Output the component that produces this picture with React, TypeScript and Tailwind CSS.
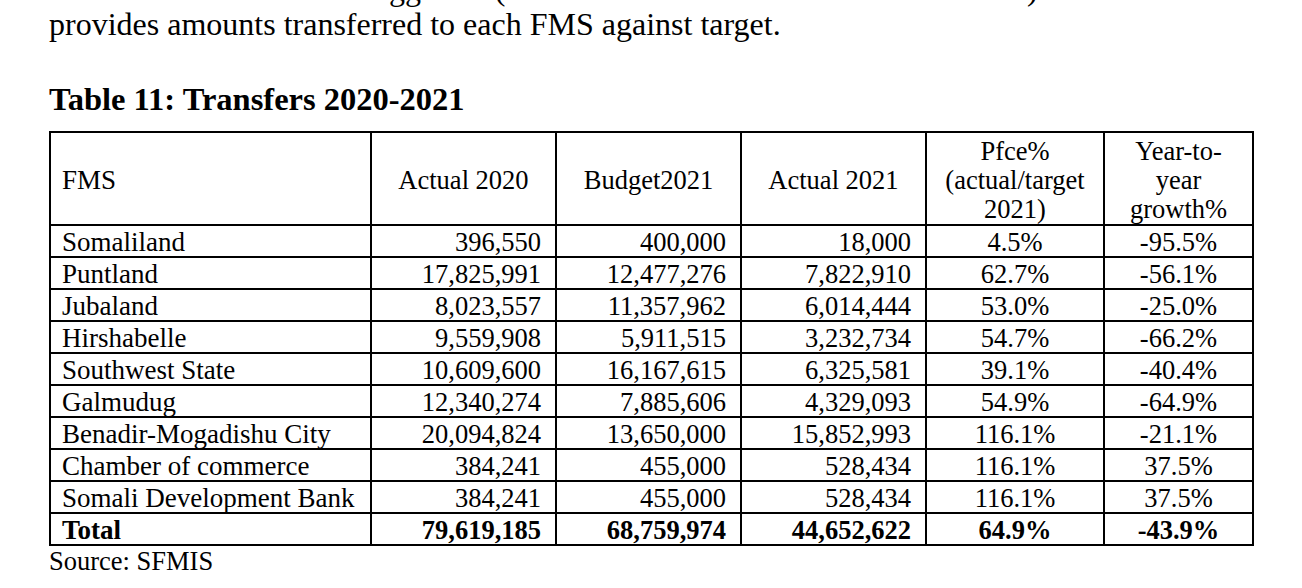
import React from "react";

type Row = [string, string, string, string, string, string];

const rows: Row[] = [
  ["Somaliland", "396,550", "400,000", "18,000", "4.5%", "-95.5%"],
  ["Puntland", "17,825,991", "12,477,276", "7,822,910", "62.7%", "-56.1%"],
  ["Jubaland", "8,023,557", "11,357,962", "6,014,444", "53.0%", "-25.0%"],
  ["Hirshabelle", "9,559,908", "5,911,515", "3,232,734", "54.7%", "-66.2%"],
  ["Southwest State", "10,609,600", "16,167,615", "6,325,581", "39.1%", "-40.4%"],
  ["Galmudug", "12,340,274", "7,885,606", "4,329,093", "54.9%", "-64.9%"],
  ["Benadir-Mogadishu City", "20,094,824", "13,650,000", "15,852,993", "116.1%", "-21.1%"],
  ["Chamber of commerce", "384,241", "455,000", "528,434", "116.1%", "37.5%"],
  ["Somali Development Bank", "384,241", "455,000", "528,434", "116.1%", "37.5%"],
];

const total: Row = ["Total", "79,619,185", "68,759,974", "44,652,622", "64.9%", "-43.9%"];

function BodyRow({ r, bold }: { r: Row; bold?: boolean }) {
  const w = bold ? "font-bold" : "";
  return (
    <>
      <div className={`h-[32px] border-b-2 border-r-2 border-black flex items-start pt-[3px] pl-[11px] leading-[27px] text-[27px] whitespace-nowrap ${w}`}>
        {r[0]}
      </div>
      <div className={`h-[32px] border-b-2 border-r-2 border-black flex items-start pt-[3px] justify-end pr-[14px] leading-[27px] ${w}`}>
        {r[1]}
      </div>
      <div className={`h-[32px] border-b-2 border-r-2 border-black flex items-start pt-[3px] justify-end pr-[14px] leading-[27px] ${w}`}>
        {r[2]}
      </div>
      <div className={`h-[32px] border-b-2 border-r-2 border-black flex items-start pt-[3px] justify-end pr-[14px] leading-[27px] ${w}`}>
        {r[3]}
      </div>
      <div className={`h-[32px] border-b-2 border-r-2 border-black flex items-start pt-[3px] justify-center leading-[27px] ${w}`}>
        {r[4]}
      </div>
      <div className={`h-[32px] border-b-2 border-r-2 border-black flex items-start pt-[3px] justify-center leading-[27px] ${w}`}>
        {r[5]}
      </div>
    </>
  );
}

export default function App() {
  return (
    <div className="w-[1302px] h-[588px] overflow-hidden flow-root bg-white text-black font-['Liberation_Serif','Times_New_Roman',serif]">
      <div className="pl-[49px] flex flex-col items-start">
        <p className="mt-[-28px] text-[32px] leading-[35px] whitespace-nowrap">
          Table 10 below lists the suggested (based on the share each of them receives)
          <br />
          provides amounts transferred to each FMS against target.
        </p>
        <h2 className="mt-[40px] text-[32.5px] leading-[35px] font-bold">Table 11: Transfers 2020-2021</h2>
        <div className="mt-[14px] grid grid-cols-[321px_185px_185px_185px_178px_149px] border-l-2 border-t-2 border-black text-[26.5px]">
          <div className="h-[93px] border-b-2 border-r-2 border-black flex items-center pt-[4px] pl-[11px] leading-[29px] text-[27px]">
            FMS
          </div>
          <div className="h-[93px] border-b-2 border-r-2 border-black flex items-center pt-[4px] justify-center text-center leading-[29px]">
            Actual 2020
          </div>
          <div className="h-[93px] border-b-2 border-r-2 border-black flex items-center pt-[4px] justify-center text-center leading-[29px]">
            Budget2021
          </div>
          <div className="h-[93px] border-b-2 border-r-2 border-black flex items-center pt-[4px] justify-center text-center leading-[29px]">
            Actual 2021
          </div>
          <div className="h-[93px] border-b-2 border-r-2 border-black flex flex-col items-center justify-center pt-[4px] text-center leading-[29px] whitespace-nowrap">
            <span>Pfce%</span>
            <span>(actual/target</span>
            <span>2021)</span>
          </div>
          <div className="h-[93px] border-b-2 border-r-2 border-black flex flex-col items-center justify-center pt-[4px] text-center leading-[29px] whitespace-nowrap">
            <span>Year-to-</span>
            <span>year</span>
            <span>growth%</span>
          </div>
          {rows.map((r) => (
            <BodyRow key={r[0]} r={r} />
          ))}
          <BodyRow r={total} bold />
        </div>
        <div className="text-[26.5px] leading-[30px]">Source: SFMIS</div>
      </div>
    </div>
  );
}
